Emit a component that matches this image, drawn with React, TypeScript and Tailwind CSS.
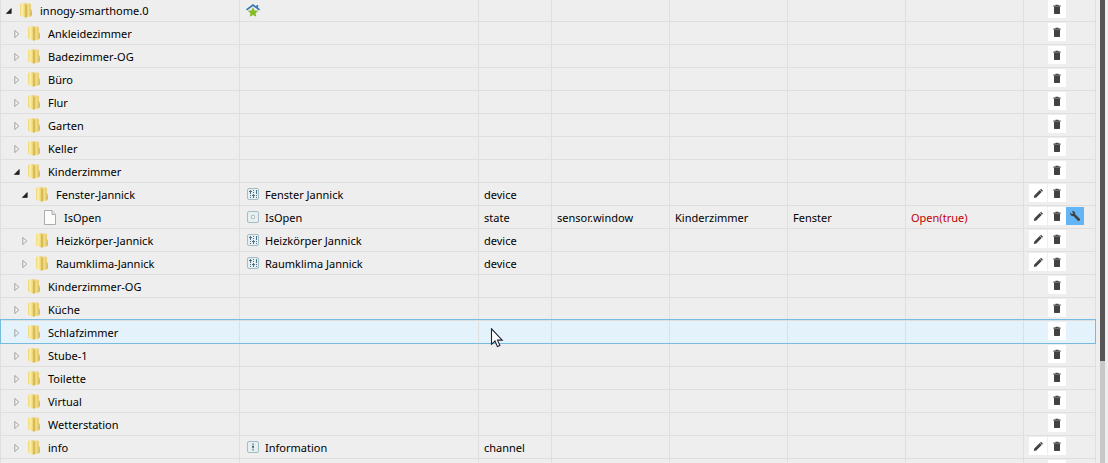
import type { ReactNode } from 'react';

type NodeIcon = 'home' | 'device' | 'state' | 'channel';

interface TreeRow {
  id: string;
  level: 0 | 1 | 2 | 3;
  open?: boolean;
  leaf?: boolean;
  icon?: NodeIcon;
  name?: string;
  type?: string;
  role?: string;
  room?: string;
  func?: string;
  value?: string;
  edit?: boolean;
  config?: boolean;
  hover?: boolean;
}

const rows: TreeRow[] = [
  { id: 'innogy-smarthome.0', level: 0, open: true, icon: 'home' },
  { id: 'Ankleidezimmer', level: 1 },
  { id: 'Badezimmer-OG', level: 1 },
  { id: 'Büro', level: 1 },
  { id: 'Flur', level: 1 },
  { id: 'Garten', level: 1 },
  { id: 'Keller', level: 1 },
  { id: 'Kinderzimmer', level: 1, open: true },
  { id: 'Fenster-Jannick', level: 2, open: true, icon: 'device', name: 'Fenster Jannick', type: 'device', edit: true },
  {
    id: 'IsOpen',
    level: 3,
    leaf: true,
    icon: 'state',
    name: 'IsOpen',
    type: 'state',
    role: 'sensor.window',
    room: 'Kinderzimmer',
    func: 'Fenster',
    value: 'Open(true)',
    edit: true,
    config: true,
  },
  { id: 'Heizkörper-Jannick', level: 2, icon: 'device', name: 'Heizkörper Jannick', type: 'device', edit: true },
  { id: 'Raumklima-Jannick', level: 2, icon: 'device', name: 'Raumklima Jannick', type: 'device', edit: true },
  { id: 'Kinderzimmer-OG', level: 1 },
  { id: 'Küche', level: 1 },
  { id: 'Schlafzimmer', level: 1, hover: true },
  { id: 'Stube-1', level: 1 },
  { id: 'Toilette', level: 1 },
  { id: 'Virtual', level: 1 },
  { id: 'Wetterstation', level: 1 },
  { id: 'info', level: 1, icon: 'channel', name: 'Information', type: 'channel', edit: true },
  { id: '', level: 0 },
];

const indent = ['pl-[3px]', 'pl-[11px]', 'pl-[19px]', 'pl-[27px]'];

function Expander({ open }: { open?: boolean }) {
  return (
    <svg className="size-2.5 shrink-0" viewBox="0 0 10 10">
      {open ? (
        <path d="M7.2 2.6V7.4H2.4Z" fill="#222" stroke="#222" strokeWidth=".8" strokeLinejoin="round" />
      ) : (
        <path d="M2.8 1.5 6.8 5 2.8 8.5Z" fill="#f4f4f4" stroke="#a2a2a2" />
      )}
    </svg>
  );
}

function Folder() {
  return (
    <svg className="size-4 shrink-0" viewBox="0 0 16 16">
      <defs>
        <linearGradient id="folder-front">
          <stop offset="0" stopColor="#f0d878" />
          <stop offset=".4" stopColor="#fbeea6" />
          <stop offset="1" stopColor="#e6c95e" />
        </linearGradient>
        <linearGradient id="folder-back">
          <stop offset="0" stopColor="#d3ae48" />
          <stop offset=".6" stopColor="#f3dd84" />
          <stop offset="1" stopColor="#dab84f" />
        </linearGradient>
      </defs>
      <path d="M5.5.6 12 .4l.8.8v5l1 .8v5.6l-1 .8L7 14.5Z" fill="url(#folder-back)" />
      <path d="M2 1.500l.8-.9L6 .5l2 1.200v13L2.800 13 2 12.300Z" fill="url(#folder-front)" />
      <path d="M7.500 1.700v13l1-.5V2.500Z" fill="#d0a842" />
      <path d="M13.300 9v3" stroke="#8ccabc" />
    </svg>
  );
}

function Page() {
  return (
    <svg className="size-4 shrink-0" viewBox="0 0 16 16">
      <path d="M2.5.5h7.5l3.5 4v10h-11Z" fill="#fcfcfa" stroke="#a5a5a2" strokeWidth=".9" />
      <path d="M10 .5v4h3.5" fill="#e5e5e0" stroke="#a5a5a2" strokeWidth=".9" />
    </svg>
  );
}

function ObjectIcon({ kind }: { kind: NodeIcon }) {
  if (kind === 'home') {
    return (
      <svg className="size-4 shrink-0" viewBox="0 0 16 16">
        <path d="M1.5 6.8 8 2l6.5 4.8M12.3 2v3" fill="none" stroke="#2f75b5" strokeWidth="1.6" />
        <path d="m8 4.2 1.6 3.200 3.700.4-2.700 2.500.7 3.500L8 12.100l-3.300 1.700.7-3.500-2.700-2.500 3.700-.4Z" fill="#86bc25" />
      </svg>
    );
  }
  return (
    <svg className="size-4 shrink-0" viewBox="0 0 16 16">
      <rect x="2.5" y="1.5" width="11" height="11" rx="1.5" fill="#e8eff1" stroke="#a5bcc4" />
      {kind === 'device' && (
        <path
          d="M5.5 3v4M5.5 8v1M5.5 10v1M8.5 3v1M8.5 5v1M8.5 7v4M11.5 3v4M11.5 8v1M11.5 10v1M4 4.5h3M7 8.5h3"
          stroke="#4a7687"
        />
      )}
      {kind === 'state' && <rect x="6.5" y="5.5" width="3" height="3" rx=".8" fill="#f4f7f8" stroke="#9db5bd" />}
      {kind === 'channel' && <path d="M8 3.5v1.3M7 6.5h2M8 5.8v2.4M8 9.3v1.3" stroke="#38667a" strokeWidth="1.3" />}
    </svg>
  );
}

function IconButton({ label, blue, children }: { label: string; blue?: boolean; children: ReactNode }) {
  return (
    <button
      aria-label={label}
      className={`flex size-[18px] items-center justify-center ${blue ? 'bg-[#64b5f6]' : 'bg-white'}`}
    >
      <svg className="size-3" viewBox="0 0 12 12" fill="#424242">
        {children}
      </svg>
    </button>
  );
}

function Cell({ children, className = 'pt-0.5 pl-[5px]' }: { children?: ReactNode; className?: string }) {
  return <td className={`h-[23px] border-r border-b border-[#dfdfdf] ${className}`}>{children}</td>;
}

function Row({ row }: { row: TreeRow }) {
  return (
    <tr className={row.hover ? 'relative bg-[#e3f2fb]' : ''}>
      <Cell className={`border-l pt-0.5 ${indent[row.level]}`}>
        <div className="flex items-center">
          {row.leaf ? <span className="w-2.5" /> : <Expander open={row.open} />}
          <span className="ml-1 flex items-center gap-1.5">
            {row.leaf ? <Page /> : <Folder />}
            {row.id}
          </span>
        </div>
        {row.hover && (
          <span className="pointer-events-none absolute inset-x-0 -top-0.5 bottom-0 border border-[#78bbe0]" />
        )}
      </Cell>
      <Cell>
        <div className="flex items-center gap-1">
          {row.icon && <ObjectIcon kind={row.icon} />}
          {row.name}
        </div>
      </Cell>
      <Cell>{row.type}</Cell>
      <Cell>{row.role}</Cell>
      <Cell>{row.room}</Cell>
      <Cell>{row.func}</Cell>
      <Cell className="pt-0.5 pl-[5px] text-[#c00000]">{row.value}</Cell>
      <Cell className="pt-px pl-[5px] align-top">
        <div className="flex">
          <span className="mr-px w-[18px]">
            {row.edit && (
              <IconButton label="Edit">
                <path d="m1.8 11 .5-2.500 5.400-5.400 2 2-5.400 5.400ZM8.100 2.700l.9-.9 2 2-.9.9Z" />
              </IconButton>
            )}
          </span>
          <IconButton label="Delete">
            <path d="M2.400 2.600H4.500V1.800H7.500V2.600H9.600V3.700H2.400ZM3 4H9V10.500L8.500 11H3.500L3 10.500Z" />
          </IconButton>
          {row.config && (
            <IconButton label="Configure" blue>
              <path d="M1.3 2.6 3 4.2l1.3-1.3L2.8 1.2C4.5.6 6.6 1.8 6.2 4.3l4.6 4.5c.9 1.3-.8 2.7-1.9 1.9L4.4 6.1C2.3 6.6.6 4.6 1.3 2.6Z" />
            </IconButton>
          )}
        </div>
      </Cell>
    </tr>
  );
}

function App() {
  return (
    <div className="flex h-screen overflow-hidden bg-[#eeeeee] font-['Noto_Sans','Open_Sans',sans-serif] text-[11px] text-black">
      <div className="relative min-w-0 flex-1">
        <table className="-mt-px w-full table-fixed border-separate border-spacing-0 leading-4 whitespace-nowrap">
          <colgroup>
            <col className="w-[240px]" />
            <col />
            <col className="w-[73px]" />
            <col className="w-[118px]" />
            <col className="w-[118px]" />
            <col className="w-[118px]" />
            <col className="w-[118px]" />
            <col className="w-[72px]" />
          </colgroup>
          <tbody>
            {rows.map((row) => (
              <Row key={row.id} row={row} />
            ))}
          </tbody>
        </table>
        <svg className="absolute top-[328px] left-[490px] h-5 w-3.5" viewBox="0 0 14 20">
          <path
            d="M1.5.8v15.5l3.5-3.3 2.4 5.6 2.5-1.1-2.4-5.4h4.7Z"
            fill="#fff"
            stroke="#1c2436"
            strokeWidth="1.1"
          />
        </svg>
      </div>
      <div className="mr-[3px] ml-1 w-[5px] bg-[#c8c8c8]">
        <div className="h-[78%] bg-[#555555]" />
      </div>
    </div>
  );
}

export default App;
